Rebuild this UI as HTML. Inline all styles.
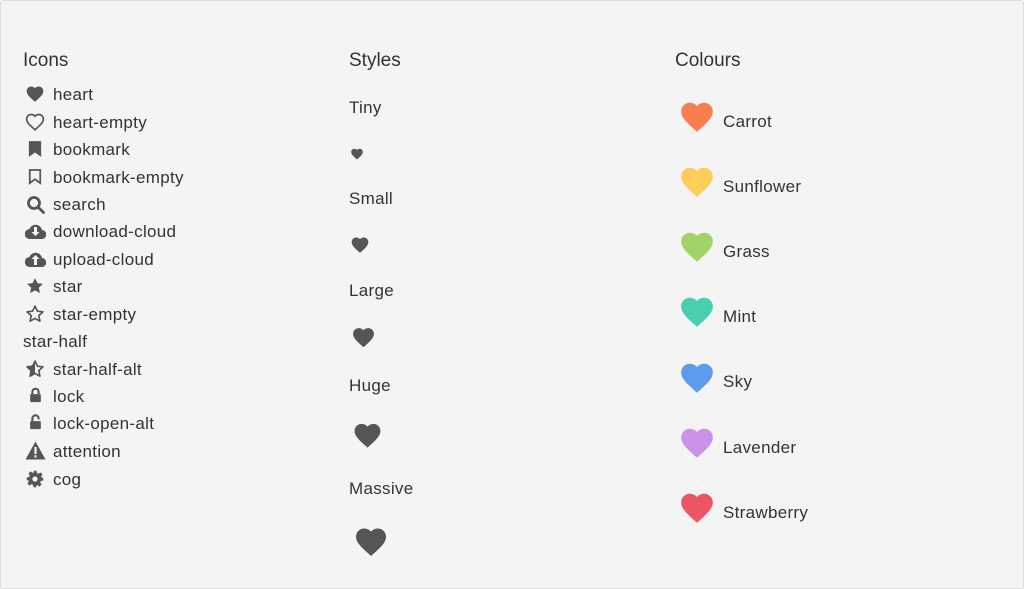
<!DOCTYPE html>
<html><head><meta charset="utf-8"><style>
html,body{margin:0;padding:0;width:1024px;height:589px;overflow:hidden;background:#fff;}
.frame{position:absolute;left:0;top:0;width:1022px;height:587px;background:#f4f4f4;border:1px solid #dcdcdc;border-radius:3px;}
.t{position:absolute;font-family:"Liberation Sans",sans-serif;font-size:17px;letter-spacing:0.3px;color:#333;line-height:20px;white-space:nowrap;margin-top:1px;}
.h{font-size:19px;letter-spacing:0;}
svg{position:absolute;}
</style></head><body>
<div class="frame"></div>
<svg width="0" height="0" style="position:absolute"><defs>
<path id="hp" d="M12 21.35l-1.45-1.32C5.4 15.36 2 12.28 2 8.5 2 5.42 4.42 3 7.5 3c1.74 0 3.41.81 4.5 2.09C13.09 3.81 14.76 3 16.5 3 19.58 3 22 5.42 22 8.5c0 3.78-3.4 6.86-8.55 11.54L12 21.35z"/>
<path id="sp" d="M12 2.5l2.9 6.1 6.6.8-4.9 4.6 1.3 6.6L12 17.3 6.1 20.6l1.3-6.6L2.5 9.4l6.6-.8z"/>
</defs></svg>

<div class="t h" style="left:23px;top:50px">Icons</div>
<div class="t h" style="left:349px;top:50px">Styles</div>
<div class="t h" style="left:675px;top:50px">Colours</div>

<svg style="left:25px;top:84px" width="20" height="20" viewBox="0 0 24 24" fill="#555"><use href="#hp"/></svg>
<div class="t" style="left:53px;top:84px">heart</div>
<svg style="left:25px;top:112px" width="20" height="20" viewBox="0 0 24 24" fill="none" stroke="#555" stroke-width="2"><use href="#hp"/></svg>
<div class="t" style="left:53px;top:112px">heart-empty</div>
<svg style="left:28px;top:141px" width="14" height="16" viewBox="0 0 16 18" fill="#555"><path d="M1 0h14v18l-7-5-7 5z"/></svg>
<div class="t" style="left:53px;top:139px">bookmark</div>
<svg style="left:28px;top:169px" width="14" height="16" viewBox="0 0 16 18" fill="none" stroke="#555" stroke-width="2"><path d="M2 1h12v15l-6-4.5L2 16z"/></svg>
<div class="t" style="left:53px;top:167px">bookmark-empty</div>
<svg style="left:26px;top:195px" width="19" height="19" viewBox="0 0 19 19" fill="none" stroke="#555" stroke-width="2.8"><circle cx="8" cy="8" r="5.5"/><path d="M12 12l5.5 5.5" stroke-linecap="round"/></svg>
<div class="t" style="left:53px;top:194px">search</div>
<svg style="left:25px;top:222px" width="21" height="18" viewBox="0 0 21 18"><path fill="#555" d="M5 17h11.5a4.5 4.5 0 0 0 .5-9A6.5 6.5 0 0 0 4.5 7 5 5 0 0 0 5 17z"/><path fill="#f4f4f4" d="M9 5h3v5h2.5l-4 4-4-4H9z"/></svg>
<div class="t" style="left:53px;top:221px">download-cloud</div>
<svg style="left:25px;top:250px" width="21" height="18" viewBox="0 0 21 18"><path fill="#555" d="M5 17h11.5a4.5 4.5 0 0 0 .5-9A6.5 6.5 0 0 0 4.5 7 5 5 0 0 0 5 17z"/><path fill="#f4f4f4" d="M10.5 5l4 4H12v6H9V9H6.5z"/></svg>
<div class="t" style="left:53px;top:249px">upload-cloud</div>
<svg style="left:25px;top:276px" width="20" height="20" viewBox="0 0 24 24" fill="#555"><use href="#sp"/></svg>
<div class="t" style="left:53px;top:276px">star</div>
<svg style="left:25px;top:304px" width="20" height="20" viewBox="0 0 24 24" fill="none" stroke="#555" stroke-width="2" stroke-linejoin="round"><use href="#sp"/></svg>
<div class="t" style="left:53px;top:304px">star-empty</div>
<div class="t" style="left:23px;top:331px">star-half</div>
<svg style="left:25px;top:359px" width="20" height="20" viewBox="0 0 24 24"><use href="#sp" fill="none" stroke="#555" stroke-width="2" stroke-linejoin="round"/><path fill="#555" d="M12 2.5v14.8L6.1 20.6l1.3-6.6L2.5 9.4l6.6-.8z"/></svg>
<div class="t" style="left:53px;top:359px">star-half-alt</div>
<svg style="left:29px;top:387px" width="13" height="16" viewBox="0 0 14 18"><path d="M3.5 8V5.5a3.5 3.5 0 0 1 7 0V8" fill="none" stroke="#555" stroke-width="2.4"/><rect x="1" y="8" width="12" height="9" rx="1" fill="#555"/></svg>
<div class="t" style="left:53px;top:386px">lock</div>
<svg style="left:29px;top:414px" width="13" height="16" viewBox="0 0 14 18"><path d="M3.5 8V5a3.5 3.5 0 0 1 7 0V6" fill="none" stroke="#555" stroke-width="2.4"/><rect x="1" y="8" width="12" height="9" rx="1" fill="#555"/></svg>
<div class="t" style="left:53px;top:413px">lock-open-alt</div>
<svg style="left:25px;top:441px" width="21" height="19" viewBox="0 0 21 19"><path fill="#555" d="M10.5 0.5L20.5 18.5H0.5z"/><rect x="9.4" y="6" width="2.2" height="7" fill="#f4f4f4"/><rect x="9.4" y="14.3" width="2.2" height="2.2" fill="#f4f4f4"/></svg>
<div class="t" style="left:53px;top:441px">attention</div>
<svg style="left:26px;top:470px" width="18" height="18" viewBox="0 0 24 24" fill="#555"><path d="M10 1h4l.6 3.2 2 .9 2.7-1.9 2.8 2.8-1.9 2.7.9 2L23 10v4l-3.2.6-.9 2 1.9 2.7-2.8 2.8-2.7-1.9-2 .9L14 23h-4l-.6-3.2-2-.9-2.7 1.9-2.8-2.8 1.9-2.7-.9-2L1 14v-4l3.2-.6.9-2-1.9-2.7 2.8-2.8 2.7 1.9 2-.9z"/><circle cx="12" cy="12" r="3.5" fill="#f4f4f4"/></svg>
<div class="t" style="left:53px;top:469px">cog</div>

<div class="t" style="left:349px;top:97px">Tiny</div>
<svg style="left:350px;top:147px" width="14" height="14" viewBox="0 0 24 24" fill="#555"><use href="#hp"/></svg>
<div class="t" style="left:349px;top:188px">Small</div>
<svg style="left:350px;top:235px" width="20" height="20" viewBox="0 0 24 24" fill="#555"><use href="#hp"/></svg>
<div class="t" style="left:349px;top:280px">Large</div>
<svg style="left:351px;top:325px" width="25" height="25" viewBox="0 0 24 24" fill="#555"><use href="#hp"/></svg>
<div class="t" style="left:349px;top:375px">Huge</div>
<svg style="left:352px;top:420px" width="31" height="31" viewBox="0 0 24 24" fill="#555"><use href="#hp"/></svg>
<div class="t" style="left:349px;top:478px">Massive</div>
<svg style="left:353px;top:524px" width="36" height="36" viewBox="0 0 24 24" fill="#555"><use href="#hp"/></svg>

<svg style="left:678px;top:98px" width="38" height="38" viewBox="0 0 24 24" fill="#f87e4f"><use href="#hp"/></svg>
<div class="t" style="left:723px;top:111px">Carrot</div>
<svg style="left:678px;top:163px" width="38" height="38" viewBox="0 0 24 24" fill="#fdcd5a"><use href="#hp"/></svg>
<div class="t" style="left:723px;top:176px">Sunflower</div>
<svg style="left:678px;top:228px" width="38" height="38" viewBox="0 0 24 24" fill="#a0d468"><use href="#hp"/></svg>
<div class="t" style="left:723px;top:241px">Grass</div>
<svg style="left:678px;top:293px" width="38" height="38" viewBox="0 0 24 24" fill="#48cfad"><use href="#hp"/></svg>
<div class="t" style="left:723px;top:306px">Mint</div>
<svg style="left:678px;top:359px" width="38" height="38" viewBox="0 0 24 24" fill="#5d9cec"><use href="#hp"/></svg>
<div class="t" style="left:723px;top:371px">Sky</div>
<svg style="left:678px;top:424px" width="38" height="38" viewBox="0 0 24 24" fill="#cc92e8"><use href="#hp"/></svg>
<div class="t" style="left:723px;top:437px">Lavender</div>
<svg style="left:678px;top:489px" width="38" height="38" viewBox="0 0 24 24" fill="#ed5565"><use href="#hp"/></svg>
<div class="t" style="left:723px;top:502px">Strawberry</div>
</body></html>
